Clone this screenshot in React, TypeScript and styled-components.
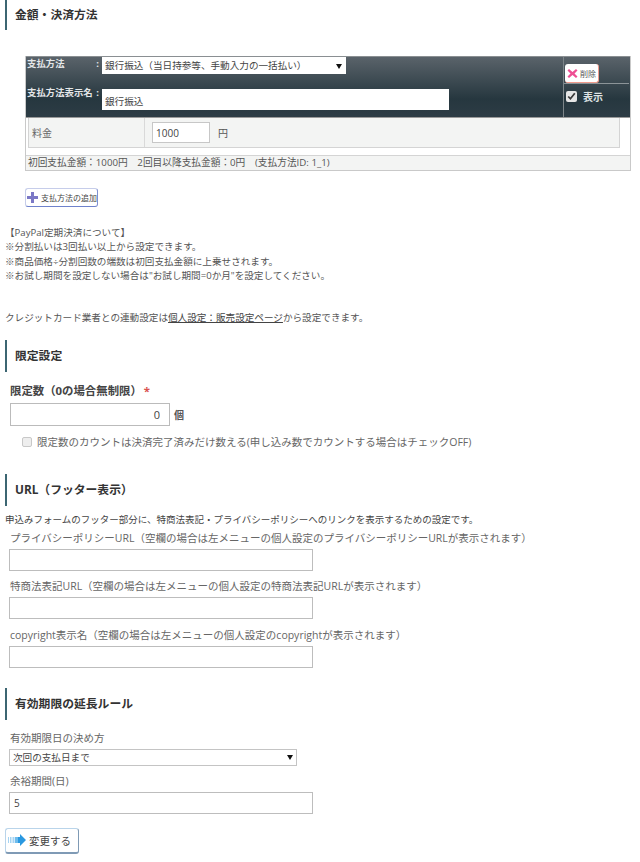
import React from "react";
import styled, { createGlobalStyle } from "styled-components";

const Global = createGlobalStyle`
  html, body { margin: 0; padding: 0; background: #fff; }
  body { font-family: "Open Sans", "Noto Sans CJK JP", sans-serif; color: #444; }
  * { box-sizing: border-box; }
`;

const Page = styled.div`
  width: 640px;
  height: 862px;
  overflow: hidden;
  display: flex;
  flex-direction: column;
`;

const Heading = styled.h2<{ $top?: number }>`
  margin: ${(p) => p.$top ?? 0}px 0 0 5px;
  height: 32px;
  flex: none;
  border-left: 2px solid #3c6672;
  padding: 0 0 1px 8px;
  display: flex;
  align-items: center;
  font-size: 11.8px;
  line-height: 16px;
  font-weight: 700;
  color: #333;
`;

const PayBlock = styled.div`
  margin: 26px 9px 0 25px;
  border: 1px solid #c9c9c9;
  border-top: 0;
  width: 606px;
`;

const PayHeader = styled.div`
  height: 62px;
  display: grid;
  grid-template-columns: 1fr 67px;
  background: linear-gradient(#5a636a, #26373f 70%, #2d3c45);
  border-top: 1px solid #8a8f92;
  border-bottom: 1px solid #999;
`;

const PayFields = styled.div`
  display: flex;
  flex-direction: column;
  padding: 0 0 0 1px;
`;

const PayRow = styled.div<{ $height: number }>`
  height: ${(p) => p.$height}px;
  display: flex;
  align-items: flex-start;
`;

const PayLabel = styled.span<{ $top: number }>`
  width: 72px;
  margin: ${(p) => p.$top}px 3px 0 0;
  font-size: 9.4px;
  line-height: 14px;
  font-weight: 700;
  color: #e4e7e9;
  white-space: nowrap;
  display: flex;
  justify-content: space-between;
`;

const SelectWrap = styled.div<{ $width: number; $height: number }>`
  position: relative;
  width: ${(p) => p.$width}px;
  height: ${(p) => p.$height}px;
`;

const DarkSelect = styled.select`
  appearance: none;
  display: block;
  width: 100%;
  height: 100%;
  border: 0;
  border-radius: 0;
  background: #fff;
  padding: 0 0 0 3px;
  font: 9.6px "Open Sans", "Noto Sans CJK JP", sans-serif;
  color: #444;
`;

const ArrowIcon = styled.svg`
  position: absolute;
  right: 4px;
  top: 50%;
  margin-top: -2px;
`;

const NameInput = styled.input`
  width: 347px;
  height: 21px;
  margin-top: 7px;
  border: 0;
  padding: 2px 3px 0;
  background: #fff;
  font: 9.6px "Open Sans", "Noto Sans CJK JP", sans-serif;
  color: #444;
`;

const SideCell = styled.div`
  border-left: 1px solid #7d8589;
  display: flex;
  flex-direction: column;
`;

const SideTop = styled.div`
  height: 27px;
  padding: 7px 0 0 1px;
  border-bottom: 1px solid #8c9498;
  margin-right: 1px;
`;

const DeleteButton = styled.button`
  width: 34px;
  height: 19px;
  padding: 0 0 0 2px;
  display: flex;
  align-items: center;
  gap: 2px;
  background: #fff;
  border: 0;
  border-right: 1px solid #f09a8c;
  border-bottom: 1px solid #f09a8c;
  border-radius: 3px;
  font: 8px "Noto Sans CJK JP", sans-serif;
  color: #555;
  white-space: nowrap;
`;

const SideBottom = styled.label`
  display: flex;
  align-items: center;
  gap: 6px;
  padding: 5px 0 0 2px;
  font-size: 10px;
  font-weight: 700;
  color: #dfe3e5;
`;

const DarkCheck = styled.input`
  width: 11px;
  height: 11px;
  margin: 0;
  accent-color: #e6e6e6;
`;

const PriceFrame = styled.div`
  margin: 0 10px 0 2px;
  height: 30px;
  display: grid;
  grid-template-columns: 116px 1fr;
  background: #f3f4f3;
  border: 1px solid #d4d4d4;
  border-top: 0;
`;

const PriceLabel = styled.div`
  display: flex;
  align-items: center;
  padding: 0 0 1px 3px;
  border-right: 1px solid #d9d9d9;
  font-size: 10px;
  color: #666;
`;

const PriceCell = styled.div`
  display: flex;
  align-items: center;
  gap: 8px;
  padding: 0 0 0 7px;
  font-size: 10px;
  color: #555;
`;

const PriceInput = styled.input`
  width: 58px;
  height: 21px;
  background: #fff;
  border: 1px solid #c7c7c7;
  padding: 0 3px;
  font: 10px "Open Sans", sans-serif;
  color: #444;
`;

const Summary = styled.div`
  margin-top: 7px;
  height: 15px;
  padding-left: 2px;
  background: #f3f4f3;
  border-top: 1px solid #d4d4d4;
  font-size: 9.7px;
  line-height: 13px;
  color: #555;
  white-space: pre;
`;

const AddButton = styled.button`
  align-self: flex-start;
  margin: 17px 0 0 25px;
  width: 73px;
  height: 19px;
  padding: 0 0 0 1px;
  display: flex;
  align-items: center;
  gap: 3px;
  background: #fff;
  border: 1px solid #c6cdea;
  border-right: 1px solid #7f8fd0;
  border-bottom: 1px solid #6f82cc;
  border-radius: 3px;
  font: 8px "Noto Sans CJK JP", sans-serif;
  color: #444;
  white-space: nowrap;
`;

const Notes = styled.div`
  margin: 19px 0 0 5px;
  font-size: 9.6px;
  line-height: 14.4px;
  color: #555;
`;

const Note = styled.div`
  white-space: nowrap;
`;

const Credit = styled.p`
  margin: 27px 0 0 5px;
  font-size: 9.6px;
  line-height: 14px;
  color: #555;
  white-space: nowrap;
`;

const Anchor = styled.a`
  color: #444;
  text-decoration: underline;
`;

const LimitLabel = styled.div`
  margin: 11px 0 4px 10px;
  font-size: 11.4px;
  line-height: 16px;
  font-weight: 700;
  color: #444;
`;

const Required = styled.span`
  color: #d9534f;
  margin-left: 2px;
`;

const LimitRow = styled.div`
  display: flex;
  align-items: center;
  gap: 4px;
  margin-left: 10px;
  font-size: 10px;
  font-weight: 700;
  color: #555;
`;

const LimitInput = styled.input`
  width: 160px;
  height: 23px;
  text-align: right;
  border: 1px solid #bbb;
  background: #fff;
  padding: 0 9px;
  font: 11px "Open Sans", sans-serif;
  color: #444;
`;

const CheckLine = styled.label`
  margin: 9px 0 0 22px;
  display: flex;
  align-items: center;
  gap: 5px;
  height: 14px;
  font-size: 10.5px;
  line-height: 14px;
  color: #666;
  white-space: nowrap;
`;

const PlainCheck = styled.input`
  appearance: none;
  width: 10px;
  height: 10px;
  margin: 0;
  background: #eee;
  border: 1px solid #c8c8c8;
  border-radius: 2px;
`;

const Description = styled.p`
  margin: 7px 0 0 5px;
  font-size: 9.5px;
  line-height: 14px;
  color: #444;
  white-space: nowrap;
`;

const FieldLabel = styled.div<{ $top: number }>`
  margin: ${(p) => p.$top}px 0 3px 10px;
  font-size: 10.5px;
  line-height: 15px;
  color: #666;
  white-space: nowrap;
`;

const TextField = styled.input`
  display: block;
  flex: none;
  margin-left: 9px;
  width: 304px;
  height: 22px;
  border: 1px solid #bdbdbd;
  background: #fff;
  padding: 0 4px;
  font: 10px "Open Sans", sans-serif;
  color: #444;
`;

const LightSelectWrap = styled(SelectWrap)`
  margin-left: 9px;
  flex: none;
`;

const LightSelect = styled(DarkSelect)`
  border: 1px solid #c4c4c4;
  background: #fff;
`;

const SubmitButton = styled.button`
  align-self: flex-start;
  flex: none;
  margin: 14px 0 0 5px;
  width: 74px;
  height: 26px;
  padding: 0 0 0 2px;
  display: flex;
  align-items: center;
  gap: 3px;
  background: #fff;
  border: 1px solid #b9d4ea;
  border-right: 1px solid #7f9ab5;
  border-bottom: 2px solid #7f9ab5;
  border-radius: 3px;
  font: 10.5px "Noto Sans CJK JP", sans-serif;
  color: #444;
  white-space: nowrap;
`;

const Arrow = () => (
  <ArrowIcon width="6" height="5" viewBox="0 0 6 5">
    <path d="M0 0h6L3 5z" fill="#111" />
  </ArrowIcon>
);

const PlusIcon = () => (
  <svg width="11" height="11" viewBox="0 0 11 11">
    <path d="M4 0h3v4h4v3H7v4H4V7H0V4h4z" fill="#7b78c6" />
  </svg>
);

const CrossIcon = () => (
  <svg width="11" height="11" viewBox="0 0 11 11">
    <path d="M2 1l3.500 3L9 1l1.500 1.500L7.500 5.500l3 3L9 10 5.500 7 2 10 .5 8.500l3-3-3-3z" fill="#ee4f93" />
  </svg>
);

const GoIcon = () => (
  <svg width="18" height="12" viewBox="0 0 18 12">
    <path d="M0 3h1v6H0zM2 3h1.500v6H2zM4.500 3h2v6h-2z" fill="#a5d4f3" />
    <path d="M7 3h3v6H7z" fill="#6fbcec" />
    <path d="M10 3h2V0l6 6-6 6V9h-2z" fill="#2a98e0" />
  </svg>
);

export default function App() {
  return (
    <Page>
      <Global />
      <Heading $top={-2}>金額・決済方法</Heading>

      <PayBlock>
        <PayHeader>
          <PayFields>
            <PayRow $height={25}>
              <PayLabel $top={0}>
                <span>支払方法</span>
                <span>:</span>
              </PayLabel>
              <SelectWrap $width={244} $height={17}>
                <DarkSelect defaultValue="a">
                  <option value="a">銀行振込（当日持参等、手動入力の一括払い）</option>
                </DarkSelect>
                <Arrow />
              </SelectWrap>
            </PayRow>
            <PayRow $height={35}>
              <PayLabel $top={4}>
                <span>支払方法表示名</span>
                <span>:</span>
              </PayLabel>
              <NameInput defaultValue="銀行振込" />
            </PayRow>
          </PayFields>
          <SideCell>
            <SideTop>
              <DeleteButton>
                <CrossIcon />
                削除
              </DeleteButton>
            </SideTop>
            <SideBottom>
              <DarkCheck type="checkbox" defaultChecked />
              表示
            </SideBottom>
          </SideCell>
        </PayHeader>
        <PriceFrame>
          <PriceLabel>料金</PriceLabel>
          <PriceCell>
            <PriceInput defaultValue="1000" />
            円
          </PriceCell>
        </PriceFrame>
        <Summary>初回支払金額：1000円　2回目以降支払金額：0円　(支払方法ID: 1_1)</Summary>
      </PayBlock>

      <AddButton>
        <PlusIcon />
        支払方法の追加
      </AddButton>

      <Notes>
        <Note>【PayPal定期決済について】</Note>
        <Note>※分割払いは3回払い以上から設定できます。</Note>
        <Note>※商品価格÷分割回数の端数は初回支払金額に上乗せされます。</Note>
        <Note>※お試し期間を設定しない場合は"お試し期間=0か月"を設定してください。</Note>
      </Notes>

      <Credit>
        クレジットカード業者との連動設定は<Anchor>個人設定：販売設定ページ</Anchor>から設定できます。
      </Credit>

      <Heading $top={15}>限定設定</Heading>
      <LimitLabel>
        限定数（0の場合無制限）<Required>*</Required>
      </LimitLabel>
      <LimitRow>
        <LimitInput defaultValue="0" />個
      </LimitRow>
      <CheckLine>
        <PlainCheck type="checkbox" />
        限定数のカウントは決済完了済みだけ数える(申し込み数でカウントする場合はチェックOFF)
      </CheckLine>

      <Heading $top={25}>URL（フッター表示）</Heading>
      <Description>申込みフォームのフッター部分に、特商法表記・プライバシーポリシーへのリンクを表示するための設定です。</Description>
      <FieldLabel $top={4}>プライバシーポリシーURL（空欄の場合は左メニューの個人設定のプライバシーポリシーURLが表示されます）</FieldLabel>
      <TextField />
      <FieldLabel $top={8}>特商法表記URL（空欄の場合は左メニューの個人設定の特商法表記URLが表示されます）</FieldLabel>
      <TextField />
      <FieldLabel $top={9}>copyright表示名（空欄の場合は左メニューの個人設定のcopyrightが表示されます）</FieldLabel>
      <TextField />

      <Heading $top={20}>有効期限の延長ルール</Heading>
      <FieldLabel $top={11}>有効期限日の決め方</FieldLabel>
      <LightSelectWrap $width={288} $height={17}>
        <LightSelect defaultValue="a">
          <option value="a">次回の支払日まで</option>
        </LightSelect>
        <Arrow />
      </LightSelectWrap>
      <FieldLabel $top={8}>余裕期間(日)</FieldLabel>
      <TextField defaultValue="5" />
      <SubmitButton>
        <GoIcon />
        変更する
      </SubmitButton>
    </Page>
  );
}
